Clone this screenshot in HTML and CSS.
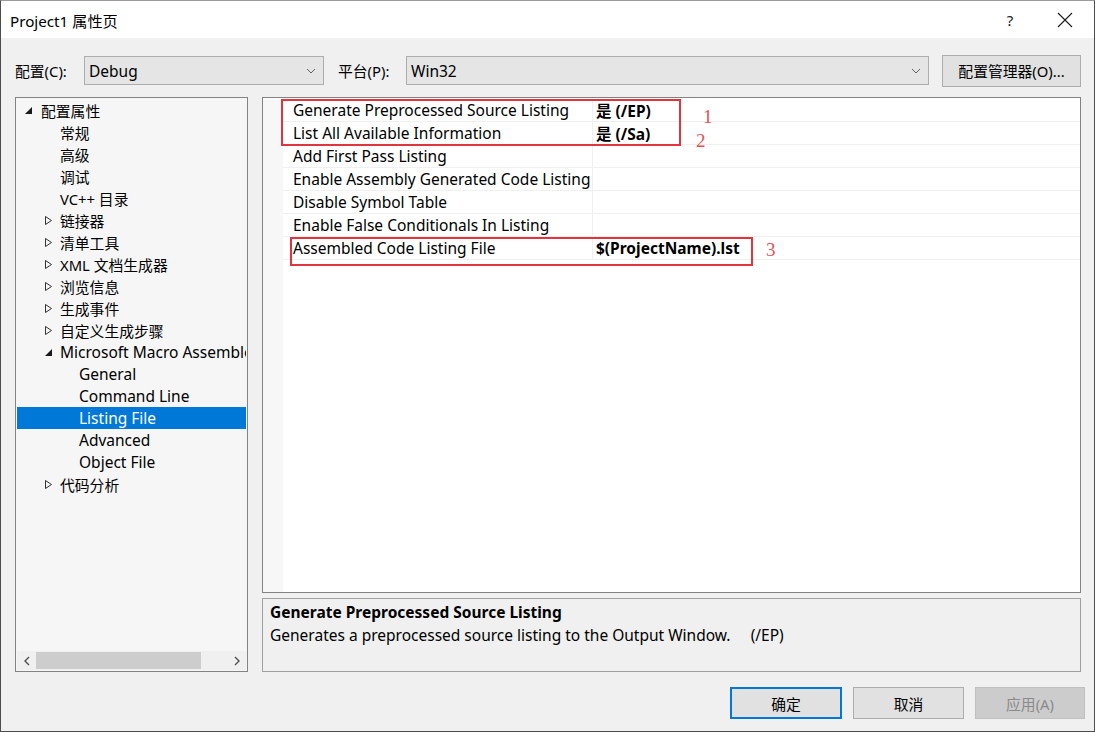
FILE: index.html
```html
<!DOCTYPE html>
<html lang="zh-CN">
<head>
<meta charset="utf-8">
<title>Project1 属性页</title>
<link rel="stylesheet" href="styles.css">
</head>
<body>
<div class="window">
  <div class="titlebar">
    <div class="title">Project1 属性页</div>
    <div class="tb-help">?</div>
    <div class="tb-close">
      <svg width="16" height="16" viewBox="0 0 16 16"><path d="M1 1L15 15M15 1L1 15" stroke="#1a1a1a" stroke-width="1.1" fill="none"/></svg>
    </div>
  </div>

  <div class="config-row">
    <span class="lbl lbl-config">配置(C):</span>
    <div class="combo combo-config"><span>Debug</span>
      <svg class="chev" width="10" height="6" viewBox="0 0 10 6"><path d="M1 1L5 5L9 1" stroke="#606060" stroke-width="1" fill="none"/></svg>
    </div>
    <span class="lbl lbl-plat">平台(P):</span>
    <div class="combo combo-plat"><span>Win32</span>
      <svg class="chev" width="10" height="6" viewBox="0 0 10 6"><path d="M1 1L5 5L9 1" stroke="#606060" stroke-width="1" fill="none"/></svg>
    </div>
    <div class="btn btn-mgr">配置管理器(O)...</div>
  </div>

  <div class="main">
    <div class="tree">
      <div class="tree-list">
        <div class="ti l0"><span class="tw"><svg width="9" height="9" viewBox="0 0 9 9"><path d="M8 1L8 8L1 8Z" fill="#1a1a1a"/></svg></span>配置属性</div>
        <div class="ti l1"><span class="tw"></span>常规</div>
        <div class="ti l1"><span class="tw"></span>高级</div>
        <div class="ti l1"><span class="tw"></span>调试</div>
        <div class="ti l1"><span class="tw"></span>VC++ 目录</div>
        <div class="ti l1c"><span class="tw"><svg width="9" height="11" viewBox="0 0 9 11"><path d="M1.5 1.5L7.5 5.5L1.5 9.5Z" fill="none" stroke="#333" stroke-width="1"/></svg></span>链接器</div>
        <div class="ti l1c"><span class="tw"><svg width="9" height="11" viewBox="0 0 9 11"><path d="M1.5 1.5L7.5 5.5L1.5 9.5Z" fill="none" stroke="#333" stroke-width="1"/></svg></span>清单工具</div>
        <div class="ti l1c"><span class="tw"><svg width="9" height="11" viewBox="0 0 9 11"><path d="M1.5 1.5L7.5 5.5L1.5 9.5Z" fill="none" stroke="#333" stroke-width="1"/></svg></span>XML 文档生成器</div>
        <div class="ti l1c"><span class="tw"><svg width="9" height="11" viewBox="0 0 9 11"><path d="M1.5 1.5L7.5 5.5L1.5 9.5Z" fill="none" stroke="#333" stroke-width="1"/></svg></span>浏览信息</div>
        <div class="ti l1c"><span class="tw"><svg width="9" height="11" viewBox="0 0 9 11"><path d="M1.5 1.5L7.5 5.5L1.5 9.5Z" fill="none" stroke="#333" stroke-width="1"/></svg></span>生成事件</div>
        <div class="ti l1c"><span class="tw"><svg width="9" height="11" viewBox="0 0 9 11"><path d="M1.5 1.5L7.5 5.5L1.5 9.5Z" fill="none" stroke="#333" stroke-width="1"/></svg></span>自定义生成步骤</div>
        <div class="ti l1c lat"><span class="tw"><svg width="9" height="9" viewBox="0 0 9 9"><path d="M8 1L8 8L1 8Z" fill="#1a1a1a"/></svg></span>Microsoft Macro Assembler</div>
        <div class="ti l2 lat"><span class="tw"></span>General</div>
        <div class="ti l2 lat"><span class="tw"></span>Command Line</div>
        <div class="ti l2 lat sel"><span class="tw"></span>Listing File</div>
        <div class="ti l2 lat"><span class="tw"></span>Advanced</div>
        <div class="ti l2 lat"><span class="tw"></span>Object File</div>
        <div class="ti l1c"><span class="tw"><svg width="9" height="11" viewBox="0 0 9 11"><path d="M1.5 1.5L7.5 5.5L1.5 9.5Z" fill="none" stroke="#333" stroke-width="1"/></svg></span>代码分析</div>
      </div>
      <div class="hscroll">
        <div class="arrow"><svg width="8" height="10" viewBox="0 0 8 10"><path d="M6 1L2 5L6 9" stroke="#505050" stroke-width="1.4" fill="none"/></svg></div>
        <div class="track"><div class="thumb"></div></div>
        <div class="arrow"><svg width="8" height="10" viewBox="0 0 8 10"><path d="M2 1L6 5L2 9" stroke="#505050" stroke-width="1.4" fill="none"/></svg></div>
      </div>
    </div>

    <div class="right">
      <div class="grid">
        <div class="margin"></div>
        <div class="rows">
          <div class="row"><div class="name">Generate Preprocessed Source Listing</div><div class="val">是 (/EP)</div></div>
          <div class="row"><div class="name">List All Available Information</div><div class="val">是 (/Sa)</div></div>
          <div class="row"><div class="name">Add First Pass Listing</div><div class="val"></div></div>
          <div class="row"><div class="name">Enable Assembly Generated Code Listing</div><div class="val"></div></div>
          <div class="row"><div class="name">Disable Symbol Table</div><div class="val"></div></div>
          <div class="row"><div class="name">Enable False Conditionals In Listing</div><div class="val"></div></div>
          <div class="row"><div class="name">Assembled Code Listing File</div><div class="val">$(ProjectName).lst</div></div>
        </div>
        <div class="mark box1"></div>
        <div class="mark box3"></div>
        <div class="num n1">1</div>
        <div class="num n2">2</div>
        <div class="num n3">3</div>
      </div>
      <div class="desc">
        <div class="desc-title">Generate Preprocessed Source Listing</div>
        <div class="desc-text">Generates a preprocessed source listing to the Output Window.     (/EP)</div>
      </div>
    </div>
  </div>

  <div class="buttons">
    <div class="btn btn-ok">确定</div>
    <div class="btn btn-cancel">取消</div>
    <div class="btn btn-apply">应用(A)</div>
  </div>
</div>
</body>
</html>
```

FILE: styles.css
```css
* { box-sizing: border-box; }
html, body { margin: 0; padding: 0; }
body {
  width: 1095px;
  height: 732px;
  overflow: hidden;
  font-family: "Segoe UI", "Noto Sans", "Noto Sans CJK SC", sans-serif;
  font-size: 14.8px;
  color: #000;
  background: #f0f0f0;
}
.window {
  width: 1095px;
  height: 732px;
  border: 1px solid #4d4d4d;
  border-top-color: #9a9a9a;
  background: #f0f0f0;
  display: flex;
  flex-direction: column;
}
.titlebar {
  height: 37px;
  background: #fff;
  display: flex;
  align-items: center;
  padding-left: 9px;
  flex-shrink: 0;
}
.title {
  flex: 1;
  font-size: 15.2px;
  color: #000;
}
.tb-help {
  width: 20px;
  margin-right: 37px;
  text-align: center;
  font-size: 15px;
  color: #1a1a1a;
}
.tb-close {
  width: 16px;
  height: 16px;
  margin-right: 21px;
  display: flex;
}
.config-row {
  display: flex;
  align-items: center;
  height: 33px;
  margin-top: 16px;
  padding-left: 14px;
  flex-shrink: 0;
}
.lbl { white-space: nowrap; }
.lbl-config { width: 69px; }
.lbl-plat { width: 68px; margin-left: 14px; }
.combo {
  height: 29px;
  background: #e5e5e5;
  border: 1px solid #adadad;
  display: flex;
  align-items: center;
  padding-left: 4px;
  padding-right: 7px;
  justify-content: space-between;
  font-size: 15.5px;
}
.combo-config { width: 240px; }
.combo-plat { width: 523px; }
.chev { margin-top: 1px; }
.btn {
  display: flex;
  align-items: center;
  justify-content: center;
  background: #e1e1e1;
  border: 1px solid #adadad;
}
.btn-mgr { width: 139px; height: 32px; margin-left: 13px; }

.main {
  display: flex;
  margin-top: 10px;
  padding-left: 14px;
  height: 575px;
  flex-shrink: 0;
}
.tree {
  width: 233px;
  height: 575px;
  border: 1px solid #828282;
  background: #f6f6f6;
  display: flex;
  flex-direction: column;
  padding: 1px 1px 0 1px;
}
.tree-list {
  flex: 1;
  overflow: hidden;
}
.ti {
  height: 22px;
  display: flex;
  align-items: center;
  white-space: nowrap;
}
.lat { font-size: 15.5px; }
.tw {
  width: 19px;
  flex-shrink: 0;
  display: flex;
  align-items: center;
  justify-content: center;
}
.l0 { padding-left: 4px; }
.l0 .tw { width: 20px; justify-content: flex-start; padding-left: 3px; }
.l1 { padding-left: 24px; }
.l1 .tw { width: 19px; }
.l1c { padding-left: 26px; }
.l1c .tw { width: 17px; justify-content: flex-start; padding-left: 1px; }
.l2 { padding-left: 43px; }
.l2 .tw { width: 19px; }
.sel { background: #0078d7; color: #fff; }
.hscroll {
  height: 19px;
  display: flex;
  align-items: center;
  margin-bottom: 1px;
  background: #f0f0f0;
}
.arrow {
  width: 19px;
  height: 19px;
  display: flex;
  align-items: center;
  justify-content: center;
}
.track { flex: 1; height: 17px; display: flex; }
.thumb { width: 165px; height: 17px; background: #cdcdcd; }

.right {
  margin-left: 14px;
  width: 819px;
  display: flex;
  flex-direction: column;
}
.grid {
  position: relative;
  height: 496px;
  border: 1px solid #828282;
  background: #fff;
  display: flex;
  padding-top: 1px;
  font-size: 15.5px;
}
.margin {
  width: 20px;
  background: #f7f7f7;
  flex-shrink: 0;
}
.rows { flex: 1; }
.row {
  height: 23px;
  display: flex;
  align-items: center;
  border-bottom: 1px solid #f0f0f0;
}
.name {
  width: 310px;
  padding-left: 10px;
  height: 100%;
  display: flex;
  align-items: center;
  border-right: 1px solid #f0f0f0;
  white-space: nowrap;
  overflow: hidden;
}
.val {
  padding-left: 3px;
  font-weight: bold;
  white-space: nowrap;
}
.mark {
  position: absolute;
  border: 2px solid #e0353e;
}
.box1 { left: 18px; top: 1px; width: 400px; height: 47px; }
.box3 { left: 27px; top: 139px; width: 463px; height: 29px; }
.num {
  position: absolute;
  font-family: "Liberation Serif", serif;
  font-size: 19px;
  color: #e4505a;
}
.n1 { left: 440px; top: 8px; }
.n2 { left: 433px; top: 32px; }
.n3 { left: 503px; top: 141px; }

.desc {
  margin-top: 5px;
  height: 74px;
  border: 1px solid #a0a0a0;
  background: #f0f0f0;
  padding: 0 7px;
  font-size: 15.5px;
}
.desc-title { font-weight: bold; height: 25px; display: flex; align-items: center; }
.desc-text { height: 22px; display: flex; align-items: center; white-space: pre; }

.buttons {
  display: flex;
  justify-content: flex-end;
  gap: 11px;
  margin-top: 15px;
  padding-right: 9px;
}
.buttons .btn { height: 32px; }
.btn-ok { width: 112px; border: 2px solid #0078d7; }
.btn-cancel { width: 111px; }
.btn-apply { width: 110px; background: #cccccc; border-color: #bfbfbf; color: #8a8a8a; }
```
